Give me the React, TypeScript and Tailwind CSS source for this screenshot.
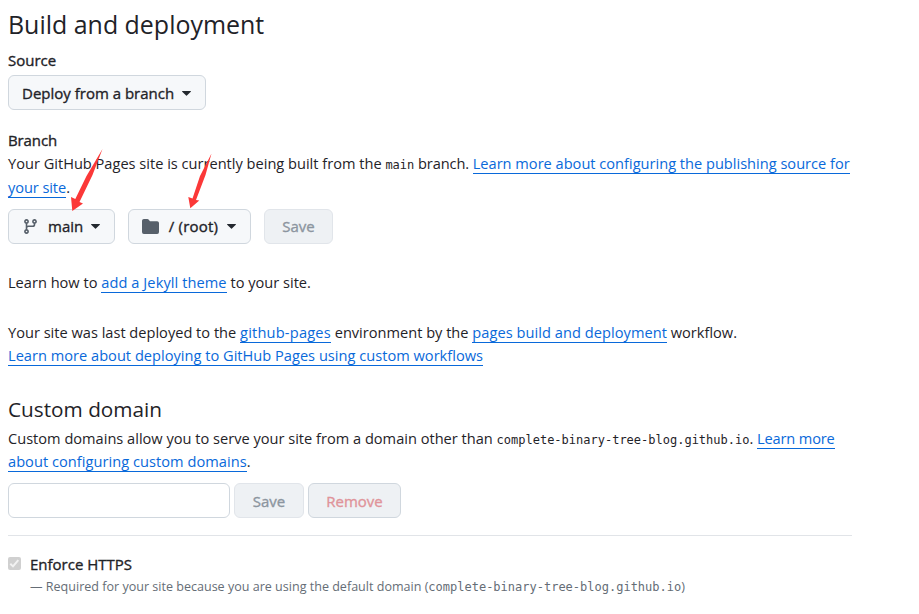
import React, { ReactNode } from "react";

function Caret({ className = "" }: { className?: string }) {
  return (
    <svg width="9" height="5" viewBox="0 0 9 5" className={"shrink-0 " + className} fill="#24292f">
      <path d="M0.5 0h8a.4.4 0 0 1 .3.7L4.9 4.6a.5.5 0 0 1-.8 0L.2.7A.4.4 0 0 1 .5 0z" />
    </svg>
  );
}

function BranchIcon() {
  return (
    <svg width="17" height="17" viewBox="0 0 16 16" fill="#57606a" className="shrink-0">
      <path d="M9.5 3.25a2.25 2.25 0 1 1 3 2.122V6A2.5 2.5 0 0 1 10 8.5H6a1 1 0 0 0-1 1v1.128a2.251 2.251 0 1 1-1.5 0V5.372a2.25 2.25 0 1 1 1.5 0v1.836A2.493 2.493 0 0 1 6 7h4a1 1 0 0 0 1-1v-.628A2.25 2.25 0 0 1 9.5 3.25Zm-6 0a.75.75 0 1 0 1.5 0 .75.75 0 0 0-1.5 0Zm8.25-.75a.75.75 0 1 0 0 1.5.75.75 0 0 0 0-1.5ZM4.25 12a.75.75 0 1 0 0 1.5.75.75 0 0 0 0-1.5Z" />
    </svg>
  );
}

function FolderIcon() {
  return (
    <svg width="17" height="17" viewBox="0 0 16 16" fill="#57606a" className="shrink-0">
      <path d="M0 2.75C0 1.784.784 1 1.75 1H5c.55 0 1.07.26 1.4.7l.9 1.2a.25.25 0 0 0 .2.1h6.75c.966 0 1.75.784 1.75 1.75v8.5A1.75 1.75 0 0 1 14.25 15H1.75A1.75 1.75 0 0 1 0 13.25Z" />
    </svg>
  );
}

function Link({ children, className = "" }: { children: ReactNode; className?: string }) {
  return <a className={"border-b border-[#0969da] text-[#0969da] " + className}>{children}</a>;
}

function Mono({ children }: { children: ReactNode }) {
  return <code className="font-['DejaVu_Sans_Mono',monospace] text-[12px] leading-none">{children}</code>;
}

const strong = "font-normal [-webkit-text-stroke:0.35px_currentColor]";
const button = "flex h-[35px] items-center rounded-md border text-[15px] " + strong;

export default function App() {
  return (
    <main className="h-[614px] w-[919px] overflow-hidden whitespace-pre bg-white pl-2 pt-[6px] font-['Open_Sans',sans-serif] text-[14.6px] text-[#1f2328]">
      <h2 className="h-9 text-[24.95px] leading-9">Build and deployment</h2>
      <h3 className={"mt-[7px] h-[22px] text-[15px] leading-[22px] " + strong}>Source</h3>
      <button className={button + " mt-[4px] w-[198px] border-[#d0d7de] bg-[#f6f8fa] pl-[13px] pt-px"}>
        <span className="w-[152px]">Deploy from a branch</span>
        <Caret className="ml-[8px]" />
      </button>

      <h3 className={"mt-[19px] h-[22px] text-[15px] leading-[22px] tracking-[-0.1px] " + strong}>Branch</h3>
      <p className="leading-6">
        Your GitHub Pages site is currently being built from the <Mono>main</Mono>
        <span className="tracking-[-0.1px]"> branch. </span>
        <Link>Learn more about configuring the publishing source for</Link>
        {"\n"}
        <Link className="tracking-[-0.08px]">your site</Link>.
      </p>
      <div className="relative mt-[10px] flex gap-[13px]">
        <button className={button + " w-[107px] border-[#d0d7de] bg-[#f6f8fa] pl-[13px]"}>
          <BranchIcon />
          <span className="ml-[9px] w-[35px]">main</span>
          <Caret className="ml-[8px]" />
        </button>
        <button className={button + " w-[123px] border-[#d0d7de] bg-[#f6f8fa] pl-[13px] tracking-[0.2px]"}>
          <FolderIcon />
          <span className="ml-[9px] w-[51px]">/ (root)</span>
          <Caret className="ml-[8px]" />
        </button>
        <button className={button + " w-[69px] justify-center border-[#e1e5ea] bg-[#eef1f4] text-[#8c959f]"}>Save</button>
        <svg className="absolute -left-2 -top-[64px]" width="260" height="70" viewBox="0 145 260 70" fill="#fb3838">
          <path d="M102.5 149 86.500 176 75.300 199 71 197 72.300 211 83 203.500 79.500 202 92.500 175Z" />
          <path d="M211.500 153.500 200 176 192.500 198.500 188.300 197 190.300 208.200 199.300 200.500 196 200 205.500 175Z" />
        </svg>
      </div>

      <p className="mt-[26px] leading-6">
        Learn how to <Link className="tracking-[0.08px]">add a Jekyll theme</Link> to your site.
      </p>
      <p className="mt-[27px] leading-[23px]">
        Your site was last deployed to the <Link className="tracking-[0.2px]">github-pages</Link> environment by the{" "}
        <Link className="tracking-[0.05px]">pages build and deployment</Link> workflow.{"\n"}
        <Link className="tracking-[0.015px]">Learn more about deploying to GitHub Pages using custom workflows</Link>
      </p>

      <h2 className="mt-[27px] h-[30px] text-[20.75px] leading-[30px]">Custom domain</h2>
      <p className="mt-[3px] leading-[23px]">
        Custom domains allow you to serve your site from a domain other than <Mono>complete-binary-tree-blog.github.io</Mono>.{" "}
        <Link className="tracking-[-0.15px]">Learn more</Link>
        {"\n"}
        <Link className="tracking-[0.04px]">about configuring custom domains</Link>.
      </p>
      <div className="mt-[10px] flex gap-1">
        <input className="h-[35px] w-[222px] rounded-md border border-[#d0d7de] bg-white" />
        <button className={button + " w-[70px] justify-center border-[#e1e5ea] bg-[#eef1f4] pt-px text-[#8c959f]"}>Save</button>
        <button className={button + " w-[93px] justify-center border-[#d0d7de] bg-[#eef1f4] pt-px text-[#e0949a]"}>Remove</button>
      </div>
      <hr className="mt-[17px] w-[844px] border-t border-[#e1e4e8]" />
      <div className="mt-[17px] flex">
        <span className="mt-1 flex size-[13px] items-center justify-center rounded-[2px] bg-[#d0d0d0]">
          <svg width="11" height="11" viewBox="0 0 11 11" fill="none" stroke="#f2f2f2" strokeWidth="2">
            <path d="M1.300 5.800 4 8.400 9.300 2.200" />
          </svg>
        </span>
        <div className="ml-[9px]">
          <h3 className={"h-[22px] text-[15px] leading-[22px] " + strong}>Enforce HTTPS</h3>
          <p className="mt-[2px] h-5 text-[12.55px] leading-5 text-[#656d76]">
            — Required for your site because you are using the default domain (<Mono>complete-binary-tree-blog.github.io</Mono>)
          </p>
        </div>
      </div>
    </main>
  );
}
